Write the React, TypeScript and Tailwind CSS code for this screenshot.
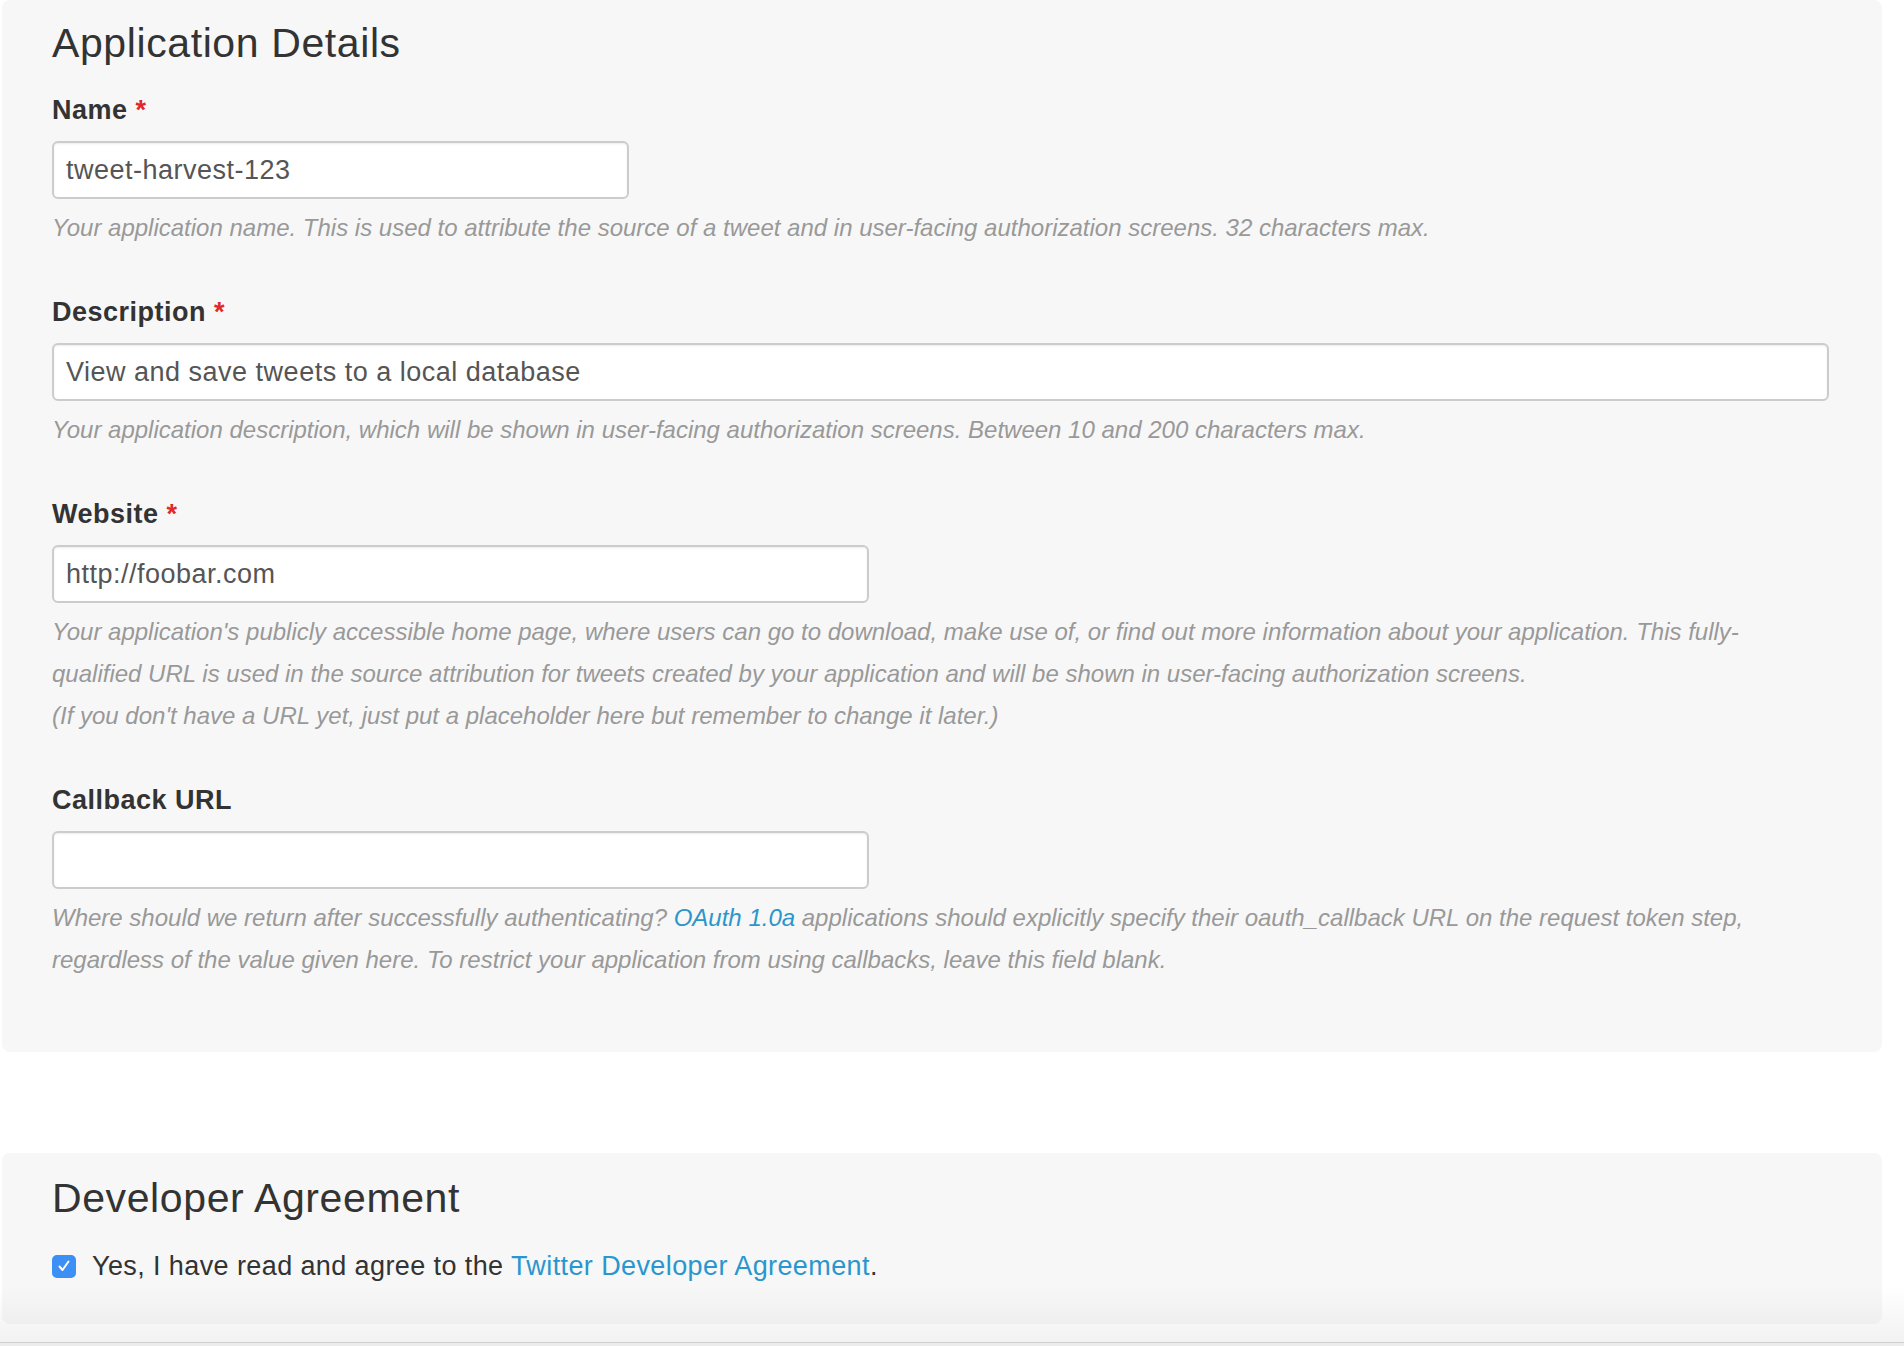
import { type ReactNode } from 'react';

interface FieldProps {
  label: string;
  required?: boolean;
  value?: string;
  inputWidth: string;
  last?: boolean;
  children: ReactNode;
}

function Field({ label, required, value, inputWidth, last, children }: FieldProps) {
  return (
    <div className={last ? '' : 'mb-[46px]'}>
      <label className="block mb-[14px] text-[27px] leading-[34px] tracking-[0.5px] font-bold text-[#333]">
        {label}
        {required && <span className="text-[#e2262a]"> *</span>}
      </label>
      <input
        type="text"
        defaultValue={value}
        className={`${inputWidth} block h-[58px] px-[12px] bg-white border-2 border-[#cccccc] rounded-[6px] shadow-[inset_0_1px_2px_rgba(0,0,0,0.08)] text-[27px] tracking-[0.5px] text-[#555] focus:outline-none`}
      />
      <p className="mt-[8px] text-[24px] leading-[42px] italic text-[#999]">{children}</p>
    </div>
  );
}

export default function App() {
  return (
    <div className="relative min-h-screen h-[1346px] overflow-hidden bg-white font-['Liberation_Sans',Arial,sans-serif]">
      <section className="ml-[2px] w-[1880px] bg-[#f7f7f7] rounded-[8px] px-[50px] pt-[19px] pb-[71px]">
        <h3 className="mb-[26px] text-[41px] leading-[48px] tracking-[0.6px] font-normal text-[#333]">Application Details</h3>

        <Field label="Name" required value="tweet-harvest-123" inputWidth="w-[577px]">
          Your application name. This is used to attribute the source of a tweet and in user-facing authorization screens. 32 characters max.
        </Field>

        <Field label="Description" required value="View and save tweets to a local database" inputWidth="w-[1777px]">
          Your application description, which will be shown in user-facing authorization screens. Between 10 and 200 characters max.
        </Field>

        <Field label="Website" required value="http://foobar.com" inputWidth="w-[817px]">
          Your application's publicly accessible home page, where users can go to download, make use of, or find out more information about your application. This fully-
          <br />
          qualified URL is used in the source attribution for tweets created by your application and will be shown in user-facing authorization screens.
          <br />
          (If you don't have a URL yet, just put a placeholder here but remember to change it later.)
        </Field>

        <Field label="Callback URL" value="" inputWidth="w-[817px]" last>
          Where should we return after successfully authenticating?{' '}
          <a href="#" className="text-[#2a96cd]">OAuth 1.0a</a> applications should explicitly specify their oauth_callback URL on the request token step,
          <br />
          regardless of the value given here. To restrict your application from using callbacks, leave this field blank.
        </Field>
      </section>

      <section className="mt-[101px] ml-[2px] w-[1880px] bg-[#f7f7f7] rounded-[8px] px-[50px] pt-[21px] pb-[40px]">
        <h3 className="mb-[26px] text-[41px] leading-[48px] tracking-[0.6px] font-normal text-[#333]">Developer Agreement</h3>
        <label className="flex items-center gap-[16px] text-[27px] leading-[36px] tracking-[0.4px] text-[#333]">
          <span className="flex items-center justify-center w-[24px] h-[23px] rounded-[5px] bg-[#3b8ff5]">
            <svg width="14" height="14" viewBox="0 0 14 14" fill="none">
              <path d="M2.5 7.5 L5.5 11 L11.5 2.5" stroke="white" strokeWidth="2" strokeLinecap="round" strokeLinejoin="round" />
            </svg>
          </span>
          <span>
            Yes, I have read and agree to the{' '}
            <a href="#" className="text-[#2a96cd]">Twitter Developer Agreement</a>.
          </span>
        </label>
      </section>

      <div className="absolute inset-x-0 bottom-0 pointer-events-none">
        <div className="h-[56px] bg-gradient-to-b from-transparent to-[rgba(0,0,0,0.05)]" />
        <div className="h-[1px] bg-[#cfcfcf]" />
        <div className="h-[3px] bg-[#ececec]" />
      </div>
    </div>
  );
}
